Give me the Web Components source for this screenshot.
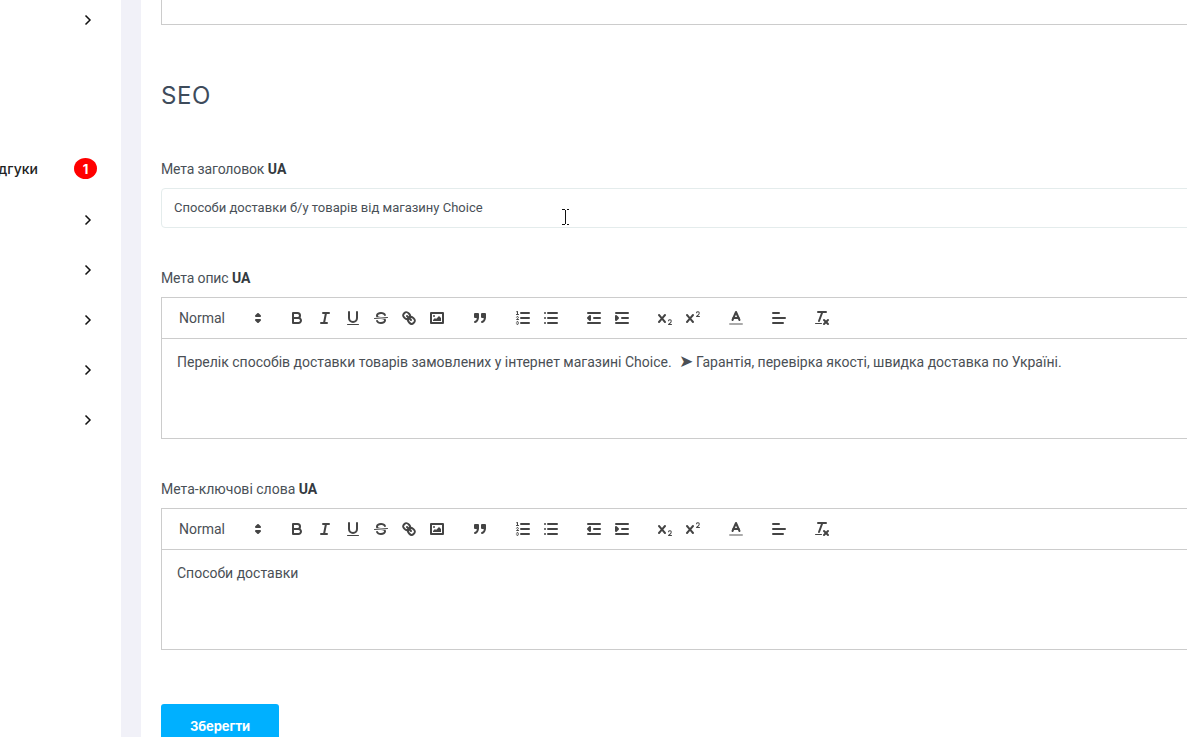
<!DOCTYPE html>
<html lang="uk">
<head>
<meta charset="utf-8">
<title>SEO</title>
<style>
html, body { margin: 0; height: 737px; overflow: hidden; background: #fff; }
body { display: flex; font-family: Roboto, "Liberation Sans", sans-serif; }
.arrow { font-size: 17px; line-height: 0; }
</style>
</head>
<body>
<app-sidebar>
    <side-row arrow></side-row>
    <side-row></side-row>
    <side-row></side-row>
    <side-row count="1">Відгуки</side-row>
    <side-row arrow></side-row>
    <side-row arrow></side-row>
    <side-row arrow></side-row>
    <side-row arrow></side-row>
    <side-row arrow></side-row>
</app-sidebar>
<page-content>
    <top-box></top-box>
    <section-title>SEO</section-title>
    <seo-form>
        <form-field><span class="tight">Мета заголовок</span> <b>UA</b><text-box slot="control">Способи доставки б/у товарів від магазину Choice</text-box></form-field>
        <form-field><span class="tight">Мета опис</span> <b>UA</b><rich-editor slot="control">Перелік способів доставки товарів замовлених у інтернет магазині Choice.&nbsp; <span class="arrow">➤</span> Гарантія, перевірка якості, швидка доставка по Україні.</rich-editor></form-field>
        <form-field>Мета-ключові слова <b>UA</b><rich-editor slot="control">Способи доставки</rich-editor></form-field>
    </seo-form>
    <save-button>Зберегти</save-button>
</page-content>
<text-cursor></text-cursor>

<script>
class AppSidebar extends HTMLElement {
    constructor() {
        super();
        this.attachShadow({ mode: 'open' });
        this.shadowRoot.innerHTML = `
            <style>
                :host {
                    display: flex;
                    flex-direction: column;
                    flex: 0 0 121px;
                    width: 121px;
                    height: 737px;
                    margin-top: -6px;
                    background: #fff;
                }
            </style>
            <slot></slot>
        `;
    }
}

class SideRow extends HTMLElement {
    constructor() {
        super();
        this.attachShadow({ mode: 'open' });
        const count = this.getAttribute('count');
        const arrow = this.hasAttribute('arrow');
        this.shadowRoot.innerHTML = `
            <style>
                :host {
                    display: flex;
                    align-items: center;
                    justify-content: flex-end;
                    flex: 0 0 50px;
                    height: 50px;
                    padding-right: 24px;
                    box-sizing: border-box;
                    font: 500 14px Inter, "Noto Sans", sans-serif;
                    color: #222;
                    white-space: nowrap;
                }
                .label { flex: none; margin-right: 36px; margin-top: -1px; }
                .badge {
                    display: flex;
                    flex: none;
                    align-items: center;
                    justify-content: center;
                    width: 23px;
                    height: 21px;
                    margin-top: -1px;
                    border-radius: 50%;
                    background: #f00;
                    color: #fff;
                    font: 700 13px Inter, sans-serif;
                }
                svg { display: block; width: 18px; height: 18px; margin-top: 1px; }
            </style>
            ${count ? `<span class="label"><slot></slot></span><span class="badge">${count}</span>` : ''}
            ${arrow ? `<svg viewBox="0 0 18 18" fill="none" stroke="#111" stroke-width="1.5"><path d="M6.500 4.500L11 9l-4.500 4.500"/></svg>` : ''}
        `;
    }
}

class PageContent extends HTMLElement {
    constructor() {
        super();
        this.attachShadow({ mode: 'open' });
        this.shadowRoot.innerHTML = `
            <style>
                :host {
                    display: block;
                    flex: 0 0 1300px;
                    box-sizing: border-box;
                    border-left: 20px solid #f1f1f8;
                    padding: 0 20px;
                    height: 800px;
                    background: #fff;
                }
            </style>
            <slot></slot>
        `;
    }
}

class TopBox extends HTMLElement {
    constructor() {
        super();
        this.attachShadow({ mode: 'open' });
        this.shadowRoot.innerHTML = `
            <style>
                :host {
                    display: block;
                    height: 25px;
                    box-sizing: border-box;
                    border: 1px solid #ccc;
                    border-top: 0;
                }
            </style>
        `;
    }
}

class SectionTitle extends HTMLElement {
    constructor() {
        super();
        this.attachShadow({ mode: 'open' });
        this.shadowRoot.innerHTML = `
            <style>
                :host {
                    display: block;
                    margin: 56px 0 49px;
                    font: 400 24px/29px Inter, sans-serif;
                    letter-spacing: .6px;
                    color: #3e4b5b;
                }
            </style>
            <slot></slot>
        `;
    }
}

class SeoForm extends HTMLElement {
    constructor() {
        super();
        this.attachShadow({ mode: 'open' });
        this.shadowRoot.innerHTML = `
            <style>
                :host { display: flex; flex-direction: column; gap: 40px; }
            </style>
            <slot></slot>
        `;
    }
}

class FormField extends HTMLElement {
    constructor() {
        super();
        this.attachShadow({ mode: 'open' });
        this.shadowRoot.innerHTML = `
            <style>
                :host {
                    display: flex;
                    flex-direction: column;
                    gap: 9px;
                    font: 400 14px/20px Roboto, sans-serif;
                    color: #495057;
                }
                ::slotted(b) { color: #343a40; }
                ::slotted(.tight) { letter-spacing: -.14px; }
            </style>
            <label><slot></slot></label>
            <slot name="control"></slot>
        `;
    }
}

class TextBox extends HTMLElement {
    constructor() {
        super();
        this.attachShadow({ mode: 'open' });
        this.shadowRoot.innerHTML = `
            <style>
                :host {
                    display: flex;
                    align-items: center;
                    height: 40px;
                    box-sizing: border-box;
                    padding: 0 12px 2px;
                    border: 1px solid #e4ecec;
                    border-radius: 4px;
                    font: 400 13px Roboto, sans-serif;
                    color: #495057;
                }
            </style>
            <slot></slot>
        `;
    }
}

// иконки тулбара
const ICONS = {
    bold: `<path class="s" d="M5,4H9.5A2.5,2.5,0,0,1,12,6.5v0A2.5,2.5,0,0,1,9.500,9H5A0,0,0,0,1,5,9V4A0,0,0,0,1,5,4Z"/><path class="s" d="M5,9h5.500A2.500,2.500,0,0,1,13,11.500v0A2.500,2.500,0,0,1,10.500,14H5a0,0,0,0,1,0,0V9A0,0,0,0,1,5,9Z"/>`,
    italic: `<line class="s" x1="7" x2="13" y1="4" y2="4"/><line class="s" x1="5" x2="11" y1="14" y2="14"/><line class="s" x1="8" x2="10" y1="14" y2="4"/>`,
    underline: `<path class="s" d="M5,3V9a4.012,4.012,0,0,0,4,4H9a4.012,4.012,0,0,0,4-4V3"/><rect class="f" height="1" rx=".5" ry=".5" width="12" x="3" y="15"/>`,
    strike: `<line class="s t" x1="15.500" x2="2.500" y1="8.500" y2="9.500"/><path class="f" d="M9.007,8C6.542,7.791,6,7.519,6,6.500,6,5.792,7.283,5,9,5c1.571,0,2.765.679,2.969,1.309a1,1,0,0,0,1.900-.617C13.356,4.106,11.354,3,9,3,6.200,3,4,4.538,4,6.500a3.200,3.200,0,0,0,.5,1.843Z"/><path class="f" d="M8.984,10C11.457,10.208,12,10.479,12,11.500c0,.708-1.283,1.500-3,1.500-1.571,0-2.765-.679-2.969-1.309a1,1,0,1,0-1.900.617C4.644,13.894,6.646,15,9,15c2.800,0,5-1.538,5-3.500a3.200,3.200,0,0,0-.5-1.843Z"/>`,
    link: `<line class="s" x1="7" x2="11" y1="7" y2="11"/><path class="s" d="M8.900,4.577a3.476,3.476,0,0,1,.36,4.679A3.476,3.476,0,0,1,4.577,8.900C3.185,7.500,2.035,6.400,4.217,4.217S7.500,3.185,8.900,4.577Z"/><path class="s" d="M13.423,9.100a3.476,3.476,0,0,0-4.679-.36,3.476,3.476,0,0,0,.36,4.679c1.392,1.392,2.500,2.542,4.679.36S14.815,10.500,13.423,9.100Z"/>`,
    image: `<rect class="s" height="10" width="12" x="3" y="4"/><circle class="f" cx="6" cy="7" r="1"/><polyline class="f" points="5 12 5 11 7 9 8 10 11 7 13 9 13 12 5 12"/>`,
    quote: `<rect class="f s" height="3" width="3" x="4" y="5"/><rect class="f s" height="3" width="3" x="11" y="5"/><path class="s" d="M7,8c0,4.031-3,5-3,5"/><path class="s" d="M14,8c0,4.031-3,5-3,5"/>`,
    ol: `<line class="s" x1="7" x2="15" y1="4" y2="4"/><line class="s" x1="7" x2="15" y1="9" y2="9"/><line class="s" x1="7" x2="15" y1="14" y2="14"/><line class="s t" x1="2.500" x2="4.500" y1="5.500" y2="5.500"/><path class="f" d="M3.500,6A0.500,0.500,0,0,1,3,5.500V3.085l-0.276.138A0.500,0.500,0,0,1,2.053,3c-0.124-.247-0.023-0.324.224-0.447l1-.5A0.500,0.500,0,0,1,4,2.500v3A0.500,0.500,0,0,1,3.500,6Z"/><path class="s t" d="M4.500,10.500h-2c0-.234,1.850-1.076,1.850-2.234A0.959,0.959,0,0,0,2.500,8.156"/><path class="s t" d="M2.500,14.846a0.959,0.959,0,0,0,1.850-.109A0.700,0.700,0,0,0,3.750,14a0.688,0.688,0,0,0,.6-0.736,0.959,0.959,0,0,0-1.850-.109"/>`,
    ul: `<line class="s" x1="6" x2="15" y1="4" y2="4"/><line class="s" x1="6" x2="15" y1="9" y2="9"/><line class="s" x1="6" x2="15" y1="14" y2="14"/><line class="s" x1="3" x2="3" y1="4" y2="4"/><line class="s" x1="3" x2="3" y1="9" y2="9"/><line class="s" x1="3" x2="3" y1="14" y2="14"/>`,
    outdent: `<line class="s" x1="3" x2="15" y1="14" y2="14"/><line class="s" x1="3" x2="15" y1="4" y2="4"/><line class="s" x1="9" x2="15" y1="9" y2="9"/><polyline class="f s" stroke-linejoin="round" points="5 7 5 11 3 9 5 7"/>`,
    indent: `<line class="s" x1="3" x2="15" y1="14" y2="14"/><line class="s" x1="3" x2="15" y1="4" y2="4"/><line class="s" x1="9" x2="15" y1="9" y2="9"/><polyline class="f s" points="3 7 3 11 5 9 3 7"/>`,
    sub: `<path class="f" d="M15.500,15H13.861a3.858,3.858,0,0,0,1.914-2.975,1.800,1.800,0,0,0-1.600-1.751A1.921,1.921,0,0,0,12.021,11.700a0.500,0.500,0,1,0,.957.291h0a0.914,0.914,0,0,1,1.053-.725,0.810,0.810,0,0,1,.744.762c0,1.076-1.170,1.870-1.940,2.431A1.456,1.456,0,0,0,12,15.500a0.500,0.500,0,0,0,.5.5h3A0.500,0.500,0,0,0,15.500,15Z"/><path class="f" d="M9.650,5.241a1,1,0,0,0-1.409.108L6,7.964,3.759,5.349A1,1,0,0,0,2.192,6.592q.024.030.049.057L4.684,9.500,2.241,12.350A1,1,0,0,0,3.710,13.707q.026-.028.049-.057L6,11.036,8.241,13.650a1,1,0,1,0,1.567-1.243q-.024-.030-.049-.057L7.316,9.500,9.759,6.651A1,1,0,0,0,9.650,5.241Z"/>`,
    sup: `<path class="f" d="M15.500,7H13.861a4.015,4.015,0,0,0,1.914-2.975,1.800,1.800,0,0,0-1.600-1.751A1.922,1.922,0,0,0,12.021,3.700a0.500,0.500,0,1,0,.957.291,0.917,0.917,0,0,1,1.053-.725,0.810,0.810,0,0,1,.744.762c0,1.077-1.164,1.925-1.934,2.486A1.423,1.423,0,0,0,12,7.500a0.500,0.500,0,0,0,.5.5h3A0.500,0.500,0,0,0,15.500,7Z"/><path class="f" d="M9.651,5.241a1,1,0,0,0-1.410.108L6,7.964,3.759,5.349a1,1,0,1,0-1.519,1.300L4.683,9.500,2.241,12.350a1,1,0,1,0,1.519,1.300L6,11.036l2.241,2.615a1,1,0,0,0,1.519-1.300L7.317,9.500,9.759,6.651A1,1,0,0,0,9.651,5.241Z"/>`,
    color: `<line class="s" style="stroke:#aaa" x1="3" x2="15" y1="15" y2="15"/><polyline class="s" points="5.500 11 9 3 12.500 11"/><line class="s" x1="11.630" x2="6.380" y1="9" y2="9"/>`,
    align: `<line class="s" x1="3" x2="15" y1="9" y2="9"/><line class="s" x1="3" x2="13" y1="14" y2="14"/><line class="s" x1="3" x2="9" y1="4" y2="4"/>`,
    clean: `<line class="s" x1="5" x2="13" y1="3" y2="3"/><line class="s" x1="6" x2="9.350" y1="12" y2="3"/><line class="s" x1="11" x2="15" y1="11" y2="15"/><line class="s" x1="15" x2="11" y1="11" y2="15"/><rect class="f" height="1" rx=".5" ry=".5" width="7" x="2" y="14"/>`
};

const GROUPS = [
    ['bold', 'italic', 'underline', 'strike', 'link', 'image'],
    ['quote'],
    ['ol', 'ul'],
    ['outdent', 'indent'],
    ['sub', 'sup'],
    ['color'],
    ['align'],
    ['clean']
];

class RichEditor extends HTMLElement {
    constructor() {
        super();
        this.attachShadow({ mode: 'open' });
        this.shadowRoot.innerHTML = `
            <style>
                :host { display: block; color: #4a4f55; font: 400 14px/20px Roboto, sans-serif; }
                .toolbar {
                    display: flex;
                    align-items: center;
                    gap: 15px;
                    padding: 8px;
                    border: 1px solid #ccc;
                }
                .picker {
                    display: flex;
                    align-items: center;
                    justify-content: space-between;
                    width: 98px;
                    height: 24px;
                    box-sizing: border-box;
                    padding: 0 1px 0 9px;
                    font: 400 14px Roboto, sans-serif;
                }
                .group { display: flex; }
                .btn { width: 28px; height: 24px; padding: 3px 5px; box-sizing: border-box; }
                svg { display: block; width: 18px; height: 18px; }
                .s { fill: none; stroke: #444; stroke-width: 2; stroke-linecap: round; stroke-linejoin: round; }
                .f { fill: #444; }
                .s.f { fill: #444; }
                .t { stroke-width: 1; }
                .content {
                    height: 100px;
                    box-sizing: border-box;
                    padding: 13px 15px 11px;
                    border: 1px solid #ccc;
                    border-top: 0;
                    white-space: nowrap;
                }
            </style>
            <div class="toolbar">
                <span class="picker">Normal
                    <svg viewBox="0 0 18 18"><polygon class="s f" points="7 11 9 13 11 11 7 11"/><polygon class="s f" points="7 7 9 5 11 7 7 7"/></svg>
                </span>
                ${GROUPS.map(group => `
                    <span class="group">
                        ${group.map(name => `<span class="btn"><svg viewBox="0 0 18 18">${ICONS[name]}</svg></span>`).join('')}
                    </span>
                `).join('')}
            </div>
            <div class="content"><slot></slot></div>
        `;
    }
}

class SaveButton extends HTMLElement {
    constructor() {
        super();
        this.attachShadow({ mode: 'open' });
        this.shadowRoot.innerHTML = `
            <style>
                :host {
                    display: flex;
                    align-items: center;
                    justify-content: center;
                    width: 118px;
                    height: 44px;
                    margin-top: 54px;
                    border-radius: 3px;
                    background: #00b0ff;
                    color: #fff;
                    font: 700 13px Inter, sans-serif;
                    letter-spacing: -.1px;
                }
            </style>
            <slot></slot>
        `;
    }
}

// курсор поверх поля ввода
class TextCursor extends HTMLElement {
    constructor() {
        super();
        this.attachShadow({ mode: 'open' });
        this.shadowRoot.innerHTML = `
            <style>
                :host { position: absolute; left: 561px; top: 209px; width: 9px; height: 16px; }
                svg { display: block; }
            </style>
            <svg width="9" height="16" viewBox="0 0 9 16" fill="none" stroke="#111" stroke-width="1" shape-rendering="crispEdges">
                <path d="M1 .5h2.500M5.500 .5H8M1 15.500h2.500M5.500 15.500H8M4.500 1v14"/>
            </svg>
        `;
    }
}

customElements.define('app-sidebar', AppSidebar);
customElements.define('side-row', SideRow);
customElements.define('page-content', PageContent);
customElements.define('top-box', TopBox);
customElements.define('section-title', SectionTitle);
customElements.define('seo-form', SeoForm);
customElements.define('form-field', FormField);
customElements.define('text-box', TextBox);
customElements.define('rich-editor', RichEditor);
customElements.define('save-button', SaveButton);
customElements.define('text-cursor', TextCursor);
</script>
</body>
</html>
